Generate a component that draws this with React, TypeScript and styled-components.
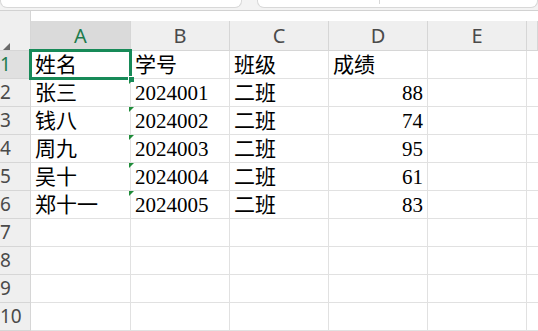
import React from "react";
import styled, { createGlobalStyle, css } from "styled-components";

const Global = createGlobalStyle`
  html, body { margin: 0; padding: 0; background: #ffffff; overflow: hidden; }
  #root { width: 538px; height: 331px; overflow: hidden; }
`;

const Page = styled.div`
  width: 538px;
  height: 331px;
  display: flex;
  flex-direction: column;
  overflow: hidden;
  background: #fff;
`;

const TopBar = styled.div`
  height: 10px;
  flex: none;
  background: #f3f3f3;
  border-bottom: 1px solid #d2d2d2;
  display: flex;
  align-items: flex-start;
  gap: 15px;
`;

const Field = styled.div<{ $w?: number }>`
  height: 7px;
  ${(p) => (p.$w ? css`width: ${p.$w}px;` : css`flex: 1;`)}
  background: #fff;
  border: 1px solid #d8d8d8;
  border-top: none;
  border-radius: 0 0 7px 7px;
  display: flex;
`;

const FieldSep = styled.div`
  margin-left: 121px;
  width: 1px;
  height: 4px;
  background: #d8d8d8;
`;

const Sheet = styled.div`
  display: grid;
  grid-template-columns: 31px 100px 99px 99px 99px 99px 1fr;
  grid-template-rows: 10px 30px repeat(10, 28px);
`;

const Corner = styled.div`
  grid-row: 1 / 3;
  grid-column: 1;
  background: #efefef;
  border-right: 1px solid #d6d6d6;
  border-bottom: 1px solid #d6d6d6;
  position: relative;
`;

const CornerMark = styled.div`
  position: absolute;
  left: 3px;
  top: 32px;
  width: 0;
  height: 0;
  border-left: 7px solid transparent;
  border-bottom: 7px solid #6a6a6a;
`;

const Gap = styled.div`
  grid-row: 1;
  grid-column: 2 / -1;
  background: #fff;
`;

const ColHead = styled.div<{ $active?: boolean }>`
  background: ${(p) => (p.$active ? "#dadada" : "#efefef")};
  border-right: 1px solid #d6d6d6;
  border-bottom: 1px solid #d6d6d6;
  color: ${(p) => (p.$active ? "#1d7b4c" : "#4a4a4a")};
  font-family: "Noto Sans", "Open Sans", sans-serif;
  font-size: 20px;
  line-height: 29px;
  text-align: center;
  overflow: hidden;
`;

const RowHead = styled.div<{ $active?: boolean }>`
  background: ${(p) => (p.$active ? "#e0e0e0" : "#efefef")};
  border-right: 1px solid #d6d6d6;
  border-bottom: 1px solid #d6d6d6;
  color: ${(p) => (p.$active ? "#1d7b4c" : "#4a4a4a")};
  font-family: "Noto Sans", "Open Sans", sans-serif;
  font-size: 19px;
  line-height: 27px;
  text-align: left;
  padding-left: 0;
  overflow: hidden;
  white-space: nowrap;
`;

const Cell = styled.div<{ $num?: boolean; $edge?: boolean }>`
  position: relative;
  background: #fff;
  border-right: ${(p) => (p.$edge ? "none" : "1px solid #e1e1e1")};
  border-bottom: 1px solid #e1e1e1;
  font-family: "Liberation Serif", "Noto Sans CJK SC", serif;
  font-size: 21px;
  line-height: 27px;
  color: #000;
  padding: 0 4px;
  text-align: ${(p) => (p.$num ? "right" : "left")};
  white-space: nowrap;
`;

const Text = styled.span`
  position: relative;
  top: 1px;
`;

const Selection = styled.div`
  position: absolute;
  top: -2px;
  left: -2px;
  right: -2px;
  bottom: -2px;
  border: 3px solid #178a58;
  pointer-events: none;
  z-index: 2;
`;

const Handle = styled.div`
  position: absolute;
  right: -5px;
  bottom: -5px;
  width: 5px;
  height: 5px;
  background: #178a58;
  box-shadow: -1px -1px 0 #fff;
`;

const TextMark = styled.div`
  position: absolute;
  left: -2px;
  top: 0;
  width: 0;
  height: 0;
  border-top: 5px solid #1f8c3a;
  border-right: 5px solid transparent;
  z-index: 1;
`;

const columns = ["A", "B", "C", "D", "E"];

const data: [string, string, string, string][] = [
  ["姓名", "学号", "班级", "成绩"],
  ["张三", "2024001", "二班", "88"],
  ["钱八", "2024002", "二班", "74"],
  ["周九", "2024003", "二班", "95"],
  ["吴十", "2024004", "二班", "61"],
  ["郑十一", "2024005", "二班", "83"],
];

export default function App() {
  const rows = Array.from({ length: 10 }, (_, i) => i);
  return (
    <Page>
      <Global />
      <TopBar>
        <Field $w={240} />
        <Field>
          <FieldSep />
        </Field>
      </TopBar>
      <Sheet>
        <Corner>
          <CornerMark />
        </Corner>
        <Gap />
        {columns.map((c, i) => (
          <ColHead key={c} $active={i === 0}>
            {c}
          </ColHead>
        ))}
        <ColHead />
        {rows.map((r) => {
          const row = data[r];
          return (
            <React.Fragment key={r}>
              <RowHead $active={r === 0}>{r + 1}</RowHead>
              <Cell>
                {row && <Text>{row[0]}</Text>}
                {r === 0 && (
                  <Selection>
                    <Handle />
                  </Selection>
                )}
              </Cell>
              <Cell>
                {row && r > 0 && <TextMark />}
                {row && <Text>{row[1]}</Text>}
              </Cell>
              <Cell>{row && <Text>{row[2]}</Text>}</Cell>
              <Cell $num={!!row && r > 0}>{row && <Text>{row[3]}</Text>}</Cell>
              <Cell />
              <Cell $edge />
            </React.Fragment>
          );
        })}
      </Sheet>
    </Page>
  );
}
